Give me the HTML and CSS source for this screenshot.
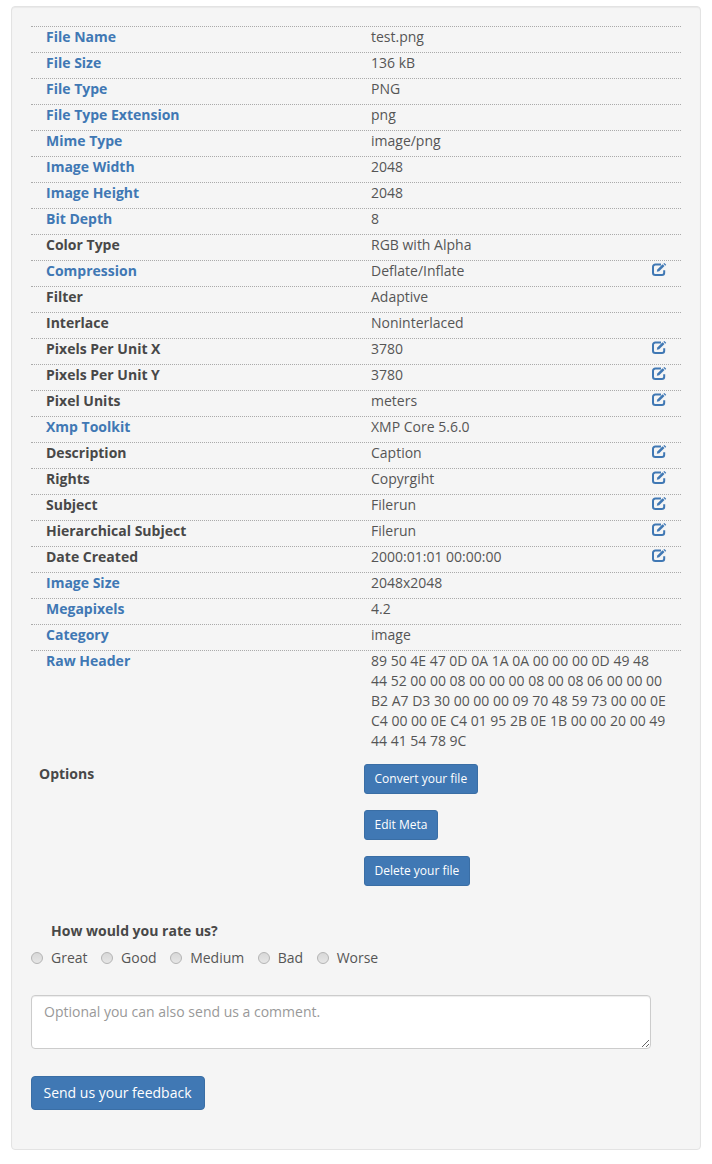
FILE: index.html
```html
<!DOCTYPE html>
<html lang="en">
<head>
<meta charset="utf-8">
<title>File metadata</title>
<link rel="stylesheet" href="styles.css">
</head>
<body>
<svg class="sprite" width="0" height="0" aria-hidden="true"><defs>
<symbol id="edit" viewBox="0 0 15 13">
<path d="M12.2 7.200v2.500A2.300 2.300 0 0 1 9.900 12H3.300A2.300 2.300 0 0 1 1 9.700V3.800A2.300 2.300 0 0 1 3.300 1.500H9" fill="none" stroke="currentColor" stroke-width="2"/>
<path d="M4.800 8.800l.5-2.400 5.300-5.200 1.900 1.900-5.300 5.200z" fill="currentColor"/>
<path d="M11.400.7l1-.7 1.800 1.800-.8 1z" fill="currentColor"/>
</symbol>
</defs></svg>
<main class="panel">
<div class="meta">
<div class="row"><a class="key link">File Name</a><span class="val">test.png</span></div>
<div class="row"><a class="key link">File Size</a><span class="val">136 kB</span></div>
<div class="row"><a class="key link">File Type</a><span class="val">PNG</span></div>
<div class="row"><a class="key link">File Type Extension</a><span class="val">png</span></div>
<div class="row"><a class="key link">Mime Type</a><span class="val">image/png</span></div>
<div class="row"><a class="key link">Image Width</a><span class="val">2048</span></div>
<div class="row"><a class="key link">Image Height</a><span class="val">2048</span></div>
<div class="row"><a class="key link">Bit Depth</a><span class="val">8</span></div>
<div class="row"><span class="key">Color Type</span><span class="val">RGB with Alpha</span></div>
<div class="row"><a class="key link">Compression</a><span class="val">Deflate/Inflate</span><svg class="edit"><use href="#edit"/></svg></div>
<div class="row"><span class="key">Filter</span><span class="val">Adaptive</span></div>
<div class="row"><span class="key">Interlace</span><span class="val">Noninterlaced</span></div>
<div class="row"><span class="key">Pixels Per Unit X</span><span class="val">3780</span><svg class="edit"><use href="#edit"/></svg></div>
<div class="row"><span class="key">Pixels Per Unit Y</span><span class="val">3780</span><svg class="edit"><use href="#edit"/></svg></div>
<div class="row"><span class="key">Pixel Units</span><span class="val">meters</span><svg class="edit"><use href="#edit"/></svg></div>
<div class="row"><a class="key link">Xmp Toolkit</a><span class="val">XMP Core 5.6.0</span></div>
<div class="row"><span class="key">Description</span><span class="val">Caption</span><svg class="edit"><use href="#edit"/></svg></div>
<div class="row"><span class="key">Rights</span><span class="val">Copyrgiht</span><svg class="edit"><use href="#edit"/></svg></div>
<div class="row"><span class="key">Subject</span><span class="val">Filerun</span><svg class="edit"><use href="#edit"/></svg></div>
<div class="row"><span class="key">Hierarchical Subject</span><span class="val">Filerun</span><svg class="edit"><use href="#edit"/></svg></div>
<div class="row"><span class="key">Date Created</span><span class="val">2000:01:01 00:00:00</span><svg class="edit"><use href="#edit"/></svg></div>
<div class="row"><a class="key link">Image Size</a><span class="val">2048x2048</span></div>
<div class="row"><a class="key link">Megapixels</a><span class="val">4.2</span></div>
<div class="row"><a class="key link">Category</a><span class="val">image</span></div>
<div class="row"><a class="key link">Raw Header</a><span class="val">89 50 4E 47 0D 0A 1A 0A 00 00 00 0D 49 48 44 52 00 00 08 00 00 00 08 00 08 06 00 00 00 B2 A7 D3 30 00 00 00 09 70 48 59 73 00 00 0E C4 00 00 0E C4 01 95 2B 0E 1B 00 00 20 00 49 44 41 54 78 9C</span></div>
</div>
<section class="options">
<strong class="options-title">Options</strong>
<div class="options-buttons">
<button class="btn btn-sm" type="button">Convert your file</button>
<button class="btn btn-sm" type="button">Edit Meta</button>
<button class="btn btn-sm" type="button">Delete your file</button>
</div>
</section>
<form class="feedback">
<p class="rate-title">How would you rate us?</p>
<div class="rates">
<label class="rate"><input type="radio" name="rate">Great</label>
<label class="rate"><input type="radio" name="rate">Good</label>
<label class="rate"><input type="radio" name="rate">Medium</label>
<label class="rate"><input type="radio" name="rate">Bad</label>
<label class="rate"><input type="radio" name="rate">Worse</label>
</div>
<textarea class="comment" placeholder="Optional you can also send us a comment."></textarea>
<button class="btn btn-md" type="button">Send us your feedback</button>
</form>
</main>
</body>
</html>
```
FILE: styles.css
```css
* { box-sizing: border-box; }
html, body { margin: 0; padding: 0; }
body {
  background: #fff;
  color: #555;
  font-family: "Open Sans", sans-serif;
  font-size: 14px;
  line-height: 20px;
}
.sprite { position: absolute; }
.panel {
  margin: 6px 11px 0;
  padding: 19px 19px 39px;
  background: #f5f5f5;
  border: 1px solid #e3e3e3;
  border-radius: 4px;
  box-shadow: inset 0 1px 1px rgba(0,0,0,.05);
}
.row {
  display: grid;
  grid-template-columns: 325px 310px 1fr;
  align-items: start;
  border-top: 1px dotted #aaa;
  min-height: 26px;
}
.key { padding-left: 15px; font-weight: 700; color: #484848; }
.key.link { color: #4078b4; }
.val { padding-left: 15px; }
.edit { width: 15px; height: 13px; margin: 2px 0 0 -14px; color: #4078b4; }
.options {
  display: grid;
  grid-template-columns: 333px 1fr;
  margin-top: 3px;
}
.options-title { padding: 10px 0 0 8px; color: #484848; }
.options-buttons {
  display: flex;
  flex-direction: column;
  align-items: flex-start;
  gap: 16px;
  padding-top: 10px;
}
.btn {
  font-family: "Open Sans", sans-serif;
  color: #fff;
  background: #4078b4;
  border: 1px solid #3a6ea5;
  border-radius: 3px;
  cursor: pointer;
}
.btn-sm { height: 30px; padding: 0 9.500px 0 9.500px; font-size: 12px; line-height: 18px; }
.btn-md { height: 34px; padding: 0 12.500px 0 11.500px; font-size: 14px; line-height: 20px; border-radius: 4px; }
.feedback { display: flex; flex-direction: column; align-items: flex-start; margin-top: 35px; }
.rate-title { margin: 0 0 7px 20px; font-weight: 700; color: #484848; }
.rates { display: flex; gap: 13.5px; }
.rate { display: flex; align-items: center; gap: 8px; }
.rate input {
  appearance: none;
  width: 12px;
  height: 12px;
  margin: 0;
  border: 1px solid #b4b4b4;
  border-radius: 50%;
  background: linear-gradient(#d8d8d8, #e6e6e6);
}
.comment {
  display: block;
  width: 620px;
  height: 54px;
  margin: 27px 0;
  padding: 6px 12px;
  font: 14px/20px "Open Sans", sans-serif;
  color: #555;
  background: #fff;
  border: 1px solid #ccc;
  border-radius: 4px;
  box-shadow: inset 0 1px 1px rgba(0,0,0,.075);
}
.comment::placeholder { color: #999; opacity: 1; }
```
